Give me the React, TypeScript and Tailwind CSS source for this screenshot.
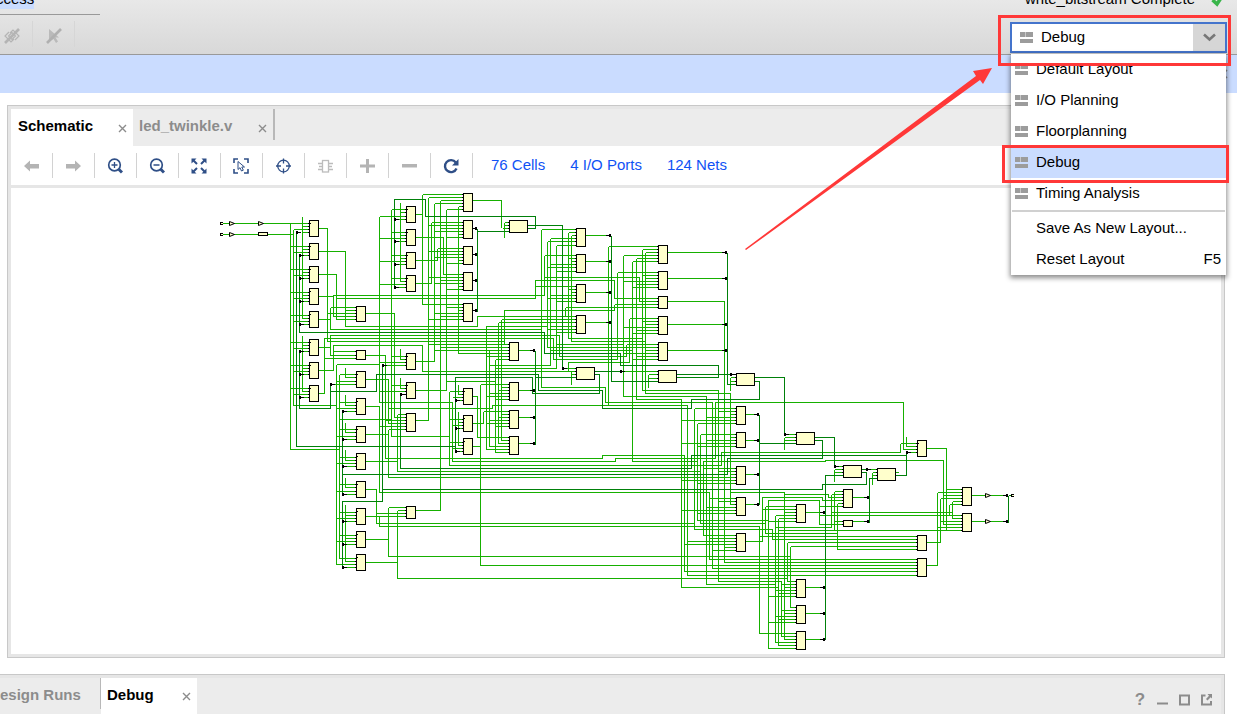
import React from "react";

type Pin = [number, number];
type Cell = { x: number; y: number; w: number; h: number; pins: Pin[]; clocked?: boolean };

const cell = (x: number, y: number, w: number, h: number, pins: Pin[], clocked = false): Cell => ({ x, y, w, h, pins, clocked });

/* Evenly spaced inputs, three units apart, each fed from the given track. */
const six = (y: number, tracks: number[]): Pin[] => tracks.map((t, i) => [y + 1 + i * 3, t] as Pin);

const cells: Cell[] = [
  ...[220, 243, 266, 288, 311, 339, 362, 385].map((y) => {
    const o = y === 288 || y === 311 ? 4 : 3;
    return cell(309, y, 9, 16, [[y + o, 290], [y + o + 3, 302], [y + o + 6, 293], [y + o + 9, 302]], true);
  }),
  cell(356, 306, 9, 15, [[307, 330], [310, 345], [313, 327], [316, 333], [319, 336]]),
  cell(356, 350, 9, 9, [[351, 333], [355, 330], [358, 324]]),
  cell(356, 371, 9, 16, [[374, 339], [377, 345], [381, 336], [384, 334]], true),
  cell(356, 398, 9, 16, [[402, 339], [405, 345], [408, 336], [411, 345]], true),
  cell(356, 426, 9, 16, [[429, 339], [432, 345], [436, 336], [439, 345]], true),
  cell(356, 453, 9, 16, [[457, 339], [460, 345], [463, 336], [466, 345]], true),
  cell(356, 481, 9, 16, [[484, 339], [487, 345], [491, 336], [494, 345]], true),
  cell(356, 508, 9, 16, [[512, 339], [515, 345], [518, 336], [521, 345]], true),
  cell(356, 531, 9, 16, [[535, 339], [538, 345], [541, 336], [544, 345]], true),
  cell(356, 554, 9, 16, [[558, 339], [561, 345], [564, 336], [567, 345]], true),
  cell(406, 206, 9, 16, [[209, 391], [212, 400], [216, 379], [219, 397]], true),
  cell(406, 229, 9, 16, [[232, 391], [235, 400], [238, 379], [241, 397]], true),
  cell(406, 252, 9, 16, [[255, 391], [258, 400], [261, 379], [264, 397]], true),
  cell(406, 275, 9, 16, [[278, 391], [281, 400], [284, 379], [287, 397]], true),
  cell(406, 353, 9, 16, [[356, 391], [359, 400], [362, 379], [365, 385]], true),
  cell(406, 382, 9, 16, [[385, 391], [388, 400], [391, 379], [394, 403]], true),
  cell(406, 413, 9, 18, [[414, 397], [417, 394], [420, 385], [423, 388], [426, 379], [429, 388]]),
  cell(406, 506, 9, 12, [[507, 388], [510, 397], [513, 376], [516, 365]]),
  cell(463, 193, 9, 18, six(193, [422, 428, 440, 434, 458, 446])),
  cell(463, 220, 9, 18, [[222, 431], [225, 428], [228, 440], [231, 434], [234, 458], [237, 446]]),
  cell(463, 246, 9, 18, [[248, 437], [251, 428], [254, 440], [257, 434], [260, 458], [263, 446]]),
  cell(463, 272, 9, 18, [[274, 443], [277, 428], [280, 440], [283, 434], [286, 458], [289, 446]]),
  cell(463, 303, 9, 18, six(303, [422, 446, 458, 434, 440, 428])),
  cell(463, 388, 9, 16, [[391, 449], [394, 458], [397, 452], [400, 459]], true),
  cell(463, 415, 9, 16, [[419, 449], [422, 458], [425, 452], [428, 459]], true),
  cell(463, 438, 9, 16, [[442, 449], [445, 458], [448, 452], [451, 459]], true),
  cell(509, 220, 18, 12, [[222, 504], [225, 504], [228, 502]]),
  cell(509, 342, 9, 18, [[344, 428], [347, 440], [350, 434], [353, 458], [356, 486], [359, 495]]),
  cell(509, 382, 9, 18, [[384, 480], [387, 501], [390, 498], [393, 489], [396, 486], [399, 495]]),
  cell(509, 410, 9, 18, six(410, [483, 501, 498, 489, 486, 495])),
  cell(509, 436, 9, 18, six(436, [477, 501, 498, 489, 486, 495])),
  cell(576, 228, 9, 18, [[229, 541], [232, 568], [235, 571], [238, 550], [241, 547], [245, 556]]),
  cell(576, 254, 9, 18, [[255, 544], [258, 568], [261, 571], [264, 550], [267, 547], [271, 556]]),
  cell(576, 284, 9, 18, [[286, 535], [289, 568], [292, 571], [295, 550], [298, 547], [301, 556]]),
  cell(576, 315, 9, 18, [[316, 477], [319, 501], [322, 498], [326, 550], [329, 547], [332, 556]]),
  cell(576, 367, 18, 12, [[368, 566], [371, 422], [374, 571]]),
  cell(658, 245, 9, 18, six(245, [608, 642, 645, 623, 636, 632])),
  cell(658, 271, 9, 18, six(271, [617, 642, 645, 623, 636, 632])),
  cell(658, 296, 9, 12, [[298, 614], [301, 639], [304, 614], [307, 565]]),
  cell(658, 316, 9, 18, [[318, 629], [321, 642], [324, 645], [327, 623], [330, 636], [333, 632]]),
  cell(658, 342, 9, 18, [[344, 626], [347, 642], [350, 645], [353, 623], [356, 636], [359, 632]]),
  cell(658, 370, 18, 12, [[371, 622], [374, 648], [378, 648]]),
  cell(736, 373, 18, 12, [[374, 733], [377, 730], [381, 730]]),
  cell(736, 406, 9, 18, [[408, 694], [411, 718], [414, 730], [417, 706], [420, 681], [423, 697]]),
  cell(736, 432, 9, 15, [[434, 700], [437, 730], [440, 706], [443, 681], [446, 697]]),
  cell(736, 466, 9, 18, [[468, 703], [471, 718], [474, 730], [477, 706], [480, 681], [483, 697]]),
  cell(736, 497, 9, 18, six(497, [709, 718, 730, 706, 681, 697])),
  cell(736, 533, 9, 18, [[535, 703], [538, 709], [541, 687], [544, 684], [547, 724], [550, 712]]),
  cell(796, 432, 18, 12, [[434, 788], [437, 784], [440, 784]]),
  cell(796, 504, 9, 18, [[506, 765], [509, 762], [512, 784], [515, 775], [518, 778], [521, 768]]),
  cell(796, 579, 9, 18, [[581, 787], [584, 781], [587, 784], [590, 775], [593, 778], [596, 768]]),
  cell(796, 605, 9, 18, [[607, 790], [610, 781], [613, 784], [616, 775], [619, 778], [622, 768]]),
  cell(796, 631, 9, 18, [[633, 759], [636, 781], [639, 784], [642, 775], [645, 778], [648, 768]]),
  cell(843, 465, 18, 12, [[466, 838], [469, 834], [472, 834]]),
  cell(843, 489, 9, 18, [[491, 834], [494, 831], [497, 828], [500, 822], [503, 837], [506, 819]]),
  cell(843, 520, 9, 6, [[521, 834], [524, 819]]),
  cell(877, 468, 18, 12, [[469, 870], [472, 872], [475, 872]]),
  cell(917, 440, 9, 16, [[443, 900], [446, 906], [449, 903], [452, 910]], true),
  cell(917, 535, 9, 15, [[536, 759], [539, 772], [542, 787], [546, 790], [549, 837]]),
  cell(917, 558, 9, 18, [[559, 709], [562, 724], [565, 480], [568, 712], [571, 684], [575, 687]]),
  cell(962, 487, 9, 18, [[489, 946], [492, 937], [495, 943], [498, 940], [501, 952], [504, 949]]),
  cell(962, 513, 9, 18, [[515, 819], [518, 952], [521, 940], [524, 943], [527, 937], [530, 778]]),
];

const nets = [
  "M222 223H308M222 234H293M290 223V449H339M293 229V405H336M302 216V318M302 335V391",
  "M318 228H327V341H504M318 251H345V326H477V316H509M318 274H336V319M318 296H333M333 316V295H544V255M336 298H535V280H614V298",
  "M544 277H639V301M318 319H330M330 307V329H541M318 347H330M330 355V335H559V356H626V344M318 370H333V345H422V371",
  "M324 358V338H553V359H617V272M318 393H324V358M365 313H394V417M365 355H385V458H602V455H684V571H917",
  "M336 364V564M336 364H379M339 374V558M345 367V377M345 394V405M345 422V432M345 449V460M345 477V487M345 504V561",
  "M365 379H388V423M379 216V402H452V461H615V458H715V402H903V449M365 406H379V492H709V559M365 434H388M388 429V477H706",
  "M365 461H397M397 414V471H700M365 489H376V523H694M365 516H379V526H759V633M365 539H388M388 507V556H790M365 562H397M397 510V578H787",
  "M339 419H391M391 209V436H449M400 202V281M400 348V359M400 377V388M388 408H492V405H687V575",
  "M415 214H422M422 194V304M415 237H443V274M415 260H437V248M415 283H431V222M422 345V371H568V362H629V318",
  "M415 361H434V203M415 390H446V209M415 420H428V197M415 510H440V200M458 206V353M458 384V394M458 411V445",
  "M449 391V465H721V452H900V443M472 200H501V227M472 396H477V437M472 423H483V411M472 446H480M480 384V565M446 381H495",
  "M504 222V237M504 344V310H614V304M486 449V326H547M489 446V350M489 365H550V238M495 452V359M495 368H556V245M498 443V322M501 440V319",
  "M541 229V387H605V402H712V568M547 241V347H642M550 350H632M556 344H623M568 232V338H642M571 235V341H645M565 316V307M571 371V384",
  "M585 235H608M585 261H608M585 292H608M585 322H608M608 246V405M632 261V461H697M623 255V396H706V584H775M636 258V399H681V587H778",
  "M642 249V390H718V581H781M645 252V393H730V504M648 374V387M667 252H724M667 278H724M667 324H724M667 350H724M667 301H724V562",
  "M730 377V390M694 408V529H772V539M697 423V520H768M700 434V523H765M703 535V461H825V460H943V524M709 492V559",
  "M745 414H756M745 440H756M745 474H756M745 504H756M745 541H762V497H822V500M730 492H784V639M784 494H828V497M768 648V500H819V524",
  "M784 437V449M765 506V533H837M837 503V549M775 515V642M778 518V645M781 581V636M787 542V581M790 546V607M775 527H831V494M834 491V530",
  "M805 512H822M805 587H822M805 613H822M805 639H822M834 469V481M831 512H952M952 501V518M949 504V515M852 497H866M852 521H866",
  "M872 472V484M895 472H898M906 436V446M926 448H946V530M926 542H940V498M926 565H937V492M971 495H1005M971 521H1005M518 350H530M518 390H530M518 417H530M518 443H530",
].join("");

const darkNets = [
  "M296 232V446H455M299 255V332H544V353H620V365H718V377H676M299 351V408H330V391H376V374H538V390H602V408H691V399H759V381H754",
  "M394 287V199H425V216H535V228H527M527 225H562V368M342 411V494M342 474H727V458H822V440H814M342 567V501H382V365M382 489H822V484H866V472H861",
  "M400 394V468H691V455H906M455 451V377H532V393H599V374H594M477 228V311M477 231H509M535 350V444M535 377H576M594 371H620",
  "M611 235V381H658M676 374H731M727 252V384H736M754 377H784V434M759 414V504M759 443H796M814 437H834V466M825 639V475H843",
  "M869 522V478H877M861 469H867M895 475H906V452M1008 495V522M1008 495H1011M330 384V391",
].join("");

/* Junction marks whose tail points right, towards an input. */
const inTaps: Pin[] = [
  [297, 232], [300, 255], [300, 278], [300, 301], [300, 324], [300, 351], [300, 374], [300, 397], [331, 384],
  [343, 411], [343, 439], [343, 466], [343, 494], [343, 521], [343, 544], [343, 567],
  [395, 219], [395, 241], [395, 264], [395, 287], [383, 365], [401, 394], [456, 400], [456, 428], [456, 451],
  [563, 368], [621, 371], [731, 374], [785, 434], [835, 466], [867, 469], [907, 452],
];

/* Junction marks whose tail points left, from an output. */
const outTaps: Pin[] = [
  [475, 228], [475, 254], [475, 280], [475, 310], [533, 350], [533, 390], [533, 417], [533, 443],
  [609, 235], [609, 261], [609, 292], [609, 322], [725, 252], [725, 278], [725, 324], [725, 350],
  [757, 414], [757, 440], [757, 474], [757, 504], [823, 512], [823, 587], [823, 613], [823, 639],
  [867, 497], [867, 521], [1006, 495], [1006, 521],
];

const buffers: Pin[] = [[229, 223], [229, 234], [258, 223], [985, 495], [985, 521]];
const ports: Pin[] = [[220, 223], [220, 234], [1011, 495]];

function Schematic() {
  return (
    <svg width="1020" height="466" viewBox="11 188 1020 466" className="block shrink-0" shapeRendering="crispEdges" role="img" aria-label="Netlist schematic">
      <g transform="translate(.5 .5)" fill="none" strokeWidth="1">
        <path d={nets} stroke="#16b000" />
        {cells.map((c, i) => (
          <path key={i} stroke="#16b000" d={c.pins.map(([y, from]) => `M${from} ${y}H${c.x}`).join("")} />
        ))}
        <path d={darkNets} stroke="#00800a" />
        {cells.map((c, i) => (
          <g key={i} stroke="#000">
            <path d={c.pins.map(([y]) => `M${c.x - 1.5} ${y}h2`).join("")} />
            <rect x={c.x} y={c.y} width={c.w} height={c.h} fill="#ffffcc" />
            {c.clocked && <path d={`M${c.x} ${c.y + 3}h1.5`} />}
          </g>
        ))}
        <rect x="258" y="232" width="9" height="3" fill="#ffffcc" stroke="#000" />
        {buffers.map(([x, y]) => (
          <path key={`${x}-${y}`} d={`M${x} ${y - 2}v4l5 -2z`} fill="#ffffcc" stroke="#000" shapeRendering="auto" />
        ))}
        {ports.map(([x, y]) => (
          <path key={`${x}-${y}`} d={`M${x + 2.5} ${y - 1}H${x}v2H${x + 2.5}`} fill="#ffffcc" stroke="#000" />
        ))}
      </g>
      <g fill="#000">
        {inTaps.map(([x, y]) => (
          <path key={`${x}-${y}`} d={`M${x - 1} ${y - 1}h2v1h3v1h-3v1h-2z`} />
        ))}
        {outTaps.map(([x, y]) => (
          <path key={`${x}-${y}`} d={`M${x + 2} ${y - 1}h-2v1h-3v1h3v1h2z`} />
        ))}
      </g>
    </svg>
  );
}

function LayoutIcon() {
  return (
    <svg width="13" height="11" viewBox="0 0 13 11" className="shrink-0" shapeRendering="crispEdges" aria-hidden="true">
      <path d="M0 0h5v5H0zM6 0h7v5H6zM0 7h13v4H0z" fill="#9c9c9c" />
      <path d="M5 0h1v5H5z" fill="#c8c8c8" />
    </svg>
  );
}

function CloseButton({ label }: { label: string }) {
  return (
    <button type="button" aria-label={label} className="mt-1 block">
      <svg width="9" height="9" viewBox="0 0 9 9" aria-hidden="true">
        <path d="M1 1l7 7M8 1l-7 7" stroke="#8c8c8c" strokeWidth="1.4" />
      </svg>
    </button>
  );
}

const navy = "#2f4f87";

const tools: { label: string; icon: React.ReactNode }[] = [
  { label: "Previous", icon: <path d="M1 8L7 2.500V6h9v4.500H7v3z" fill="#b4b4b4" /> },
  { label: "Next", icon: <path d="M16 8L10 2.500V6H1v4.500h9v3z" fill="#b4b4b4" /> },
  {
    label: "Zoom In",
    icon: (
      <g fill="none" stroke={navy}>
        <circle cx="7.500" cy="7" r="5.800" strokeWidth="1.700" />
        <path d="M4.500 7h6M7.500 4v6" strokeWidth="1.300" />
        <path d="M11.500 11l3.500 3.500" strokeWidth="3" />
      </g>
    ),
  },
  {
    label: "Zoom Out",
    icon: (
      <g fill="none" stroke={navy}>
        <circle cx="7.500" cy="7" r="5.800" strokeWidth="1.700" />
        <path d="M4.500 7h6" strokeWidth="1.500" />
        <path d="M11.500 11l3.500 3.500" strokeWidth="3" />
      </g>
    ),
  },
  {
    label: "Zoom Fit",
    icon: (
      <g fill={navy} stroke={navy}>
        <path d="M.5.5h5l-5 5zM15.500.5h-5l5 5zM.5 15.500h5l-5-5zM15.500 15.500h-5l5-5z" stroke="none" />
        <path d="M2 2l4 4M14 2l-4 4M2 14l4-4M14 14l-4-4" strokeWidth="2" />
      </g>
    ),
  },
  {
    label: "Select Area",
    icon: (
      <g fill="none" stroke={navy}>
        <path d="M1 5V1h4M11 1h4v4M15 11v4h-4M5 15H1v-4" strokeWidth="1.600" />
        <path d="M5 3.500v8l2-1.800 1.500 3.300 1.800-.8-1.500-3.200h2.700z" strokeWidth="1" />
      </g>
    ),
  },
  {
    label: "Autofit Selection",
    icon: (
      <g fill="none" stroke={navy} strokeWidth="1.300">
        <circle cx="8.500" cy="8" r="5.800" />
        <path d="M8.500.5v5M8.500 10.500v5M1 8h5M11 8h5" />
      </g>
    ),
  },
  {
    label: "Expand Cell",
    icon: (
      <g fill="none" stroke="#bcbcbc" strokeWidth="1.300">
        <rect x="5.500" y="2.500" width="6" height="11.500" />
        <path d="M1 5.500h4.500M2 8.500h3.500M1 11.500h4.500M11.500 5.500H16M11.500 8.500H15M11.500 11.500H16" />
      </g>
    ),
  },
  { label: "Add", icon: <path d="M7 1h3v5.500h6v3h-6V15H7V9.500H1v-3h6z" fill="#b4b4b4" /> },
  { label: "Remove", icon: <path d="M1 6h15v3.500H1z" fill="#b4b4b4" /> },
  {
    label: "Regenerate",
    icon: (
      <g>
        <path d="M13.500 10.500A6 6 0 1 1 12.800 4.500" fill="none" stroke={navy} strokeWidth="2.400" />
        <path d="M15.500 1v6.500H9z" fill={navy} />
      </g>
    ),
  },
];

const layouts = ["Default Layout", "I/O Planning", "Floorplanning", "Debug", "Timing Analysis"];

function Header() {
  return (
    <header className="relative flex h-[55px] shrink-0 justify-between border-b border-[#999] bg-linear-to-b from-[#e8e8e8] to-[#d8d8d8]">
      <div className="w-[100px]">
        <div className="h-[15px] overflow-hidden border-b border-[#999]">
          <span className="-mt-[11px] -ml-1 block h-5 w-[38px] bg-[#cadcff] text-[15px] leading-5">ccess</span>
        </div>
        <div className="flex h-[38px] items-center">
          <button type="button" aria-label="Hide selection" className="flex h-[26px] w-[33px] items-center border-r border-[#d6d6d6] pl-1">
            <svg width="16" height="16" viewBox="0 0 16 16" fill="none" stroke="#b4b4b4" aria-hidden="true" className="mt-1">
              <path d="M5 4L1 8l6 6 3-3M11 12l4-4-6-6-3 3M8 4.500L4.500 8 8 11.500 11.500 8z" strokeWidth="1.200" />
              <path d="M1 15L15 1" strokeWidth="2.600" />
            </svg>
          </button>
          <button type="button" aria-label="Unselect" className="flex h-[26px] w-[42px] items-center border-r border-[#d6d6d6] pl-[13px]">
            <svg width="16" height="16" viewBox="0 0 16 16" aria-hidden="true" className="mt-1">
              <path d="M3 1l10 8.500H9.500l2.500 4-2 1.500-2.500-4L3 13.500z" fill="#bababa" />
              <path d="M1 15L15 1" stroke="#b0b0b0" strokeWidth="2.600" />
            </svg>
          </button>
        </div>
      </div>

      <div className="mr-[10px] w-[217px]">
        <div className="flex h-[22px] justify-end gap-4 overflow-hidden pr-[3px]">
          <span className="-mt-[11px] text-[15px] leading-5 whitespace-nowrap">write_bitstream Complete</span>
          <svg width="13" height="8" viewBox="0 0 13 8" aria-label="Complete" className="shrink-0">
            <path d="M1.500 0l4.500 4L12-5" stroke="#39b54a" strokeWidth="3.500" fill="none" />
          </svg>
        </div>
        <div className="relative flex h-[31px] items-center border-2 border-[#4474cc] bg-white">
          <span className="pointer-events-none absolute left-2">
            <LayoutIcon />
          </span>
          <select aria-label="Layout" defaultValue="Debug" className="h-full w-full appearance-none bg-transparent pb-[2px] pl-[29px] text-[15px] leading-5 outline-none">
            {layouts.map((l) => (
              <option key={l}>{l}</option>
            ))}
          </select>
          <span className="pointer-events-none absolute right-0 flex h-full w-8 items-center justify-center bg-[#d6d6d6]">
            <svg width="13" height="9" viewBox="0 0 13 9" aria-hidden="true">
              <path d="M1 1.500l5.500 5 5.500-5" fill="none" stroke="#777" strokeWidth="2.600" />
            </svg>
          </span>
        </div>
      </div>

      <div role="menu" className="absolute top-[54px] right-[11px] z-10 w-[215px] bg-white text-[15px] leading-5 shadow-[0_2px_5px_1px_rgba(0,0,0,0.45)]">
        {layouts.map((l) => (
          <button key={l} type="button" role="menuitem" className={`flex h-[31px] w-full items-center gap-2 pl-1 text-left ${l === "Debug" ? "bg-[#cadcff]" : "bg-white"}`}>
            <LayoutIcon />
            <span className="pb-[2px]">{l}</span>
          </button>
        ))}
        <div className="mx-px h-1 border-y border-white bg-[#d0d0d0]" />
        <button type="button" role="menuitem" className="flex h-[31px] w-full items-center pb-[2px] pl-[25px]">Save As New Layout...</button>
        <button type="button" role="menuitem" className="flex h-[31px] w-full items-center justify-between pr-[5px] pb-[2px] pl-[25px]">
          <span>Reset Layout</span>
          <span>F5</span>
        </button>
      </div>
    </header>
  );
}

function Annotations() {
  return (
    <svg width="497" height="256" viewBox="740 0 497 256" className="pointer-events-none absolute top-0 right-0 z-20" aria-hidden="true">
      <path d="M745 249L976 76l-3-5 19-3-9 16-3-4L746 250z" fill="#ff3838" />
      <path d="M999.500 16.500h230v48h-230zM1003.500 146.500h224v35h-224z" fill="none" stroke="#ff3838" strokeWidth="3" />
    </svg>
  );
}

export default function App() {
  return (
    <div className="relative flex min-h-screen flex-col overflow-hidden bg-white font-['Liberation_Sans',Arial,sans-serif] text-[15px] text-black">
      <Header />
      <div className="flex h-[38px] shrink-0 items-center justify-end bg-[#cadcff] pr-2">
        <button type="button" aria-label="Close">
          <svg width="12" height="12" viewBox="0 0 12 12" className="block" aria-hidden="true">
            <path d="M2 2l8 8M10 2l-8 8" stroke="#8c8c8c" strokeWidth="1.600" />
          </svg>
        </button>
      </div>

      <main className="mt-3 mr-3 ml-[7px] shrink-0 border border-[#c8c8c8] bg-[#e6e6e6] p-[3px]">
        <div className="flex h-[37px] bg-[#ececec] font-bold" role="tablist">
          <div className="flex w-[122px] items-center justify-between bg-white pr-[6px] pb-[3px] pl-[7px]">
            <button type="button" role="tab" aria-selected="true" className="leading-5">Schematic</button>
            <CloseButton label="Close Schematic" />
          </div>
          <div className="flex h-[31px] w-[142px] items-center justify-between border-r-2 border-[#b8b8b8] pr-[6px] pl-[6px] text-[#8c8c8c]">
            <button type="button" role="tab" aria-selected="false" className="mt-[3px] leading-5">led_twinkle.v</button>
            <span className="mt-[3px]">
              <CloseButton label="Close led_twinkle.v" />
            </span>
          </div>
        </div>
        <div className="flex h-[39px] items-center bg-white">
          {tools.map((t) => (
            <button key={t.label} type="button" aria-label={t.label} className="flex h-[25px] w-[42px] shrink-0 items-center border-r border-[#d2d2d2] pl-3">
              <svg width="16" height="16" viewBox="0 0 16 16" aria-hidden="true">
                {t.icon}
              </svg>
            </button>
          ))}
          <nav className="ml-[18px] flex gap-[25px] pb-[2px] leading-5 whitespace-nowrap text-[#0f52f5]">
            <a href="#cells">76 Cells</a>
            <a href="#ports">4 I/O Ports</a>
            <a href="#nets">124 Nets</a>
          </nav>
        </div>
        <div className="mt-[3px] overflow-hidden bg-white">
          <Schematic />
        </div>
      </main>

      <section className="mt-4 mr-3 flex-1 border-t border-r border-[#c8c8c8] bg-[#e6e6e6] pt-[3px] pr-[3px]">
        <div className="flex h-full min-h-9 bg-[#ececec] font-bold">
          <div className="flex h-[31px] w-[101px] items-center border-r border-[#b8b8b8] pt-[3px] text-[#8c8c8c]">
            <button type="button" className="leading-5 whitespace-nowrap">esign Runs</button>
          </div>
          <div className="flex w-24 items-center justify-between bg-white pr-[6px] pb-[3px] pl-[6px]">
            <button type="button" className="leading-5">Debug</button>
            <CloseButton label="Close Debug" />
          </div>
          <div className="mt-[7px] mr-[9px] ml-auto flex items-center gap-[10px] text-[#8c8c8c]">
            <button type="button" aria-label="Help" className="w-3 text-[17px] leading-5">?</button>
            <button type="button" aria-label="Minimize">
              <svg width="12" height="12" viewBox="0 0 12 12" className="block"><path d="M1 8.500h11v2H1z" fill="#8c8c8c" /></svg>
            </button>
            <button type="button" aria-label="Maximize">
              <svg width="12" height="12" viewBox="0 0 12 12" className="block"><path d="M2 1.500h9v9H2z" fill="none" stroke="#8c8c8c" strokeWidth="2" /></svg>
            </button>
            <button type="button" aria-label="Float">
              <svg width="12" height="12" viewBox="0 0 12 12" className="block">
                <path d="M5.500 1.500H2v9h9V7" fill="none" stroke="#8c8c8c" strokeWidth="2" />
                <path d="M12 0v4.500l-1.300-1.300L7.500 6.500 6 5l3-3.200L7.500 0z" fill="#8c8c8c" />
              </svg>
            </button>
          </div>
        </div>
      </section>
      <Annotations />
    </div>
  );
}
